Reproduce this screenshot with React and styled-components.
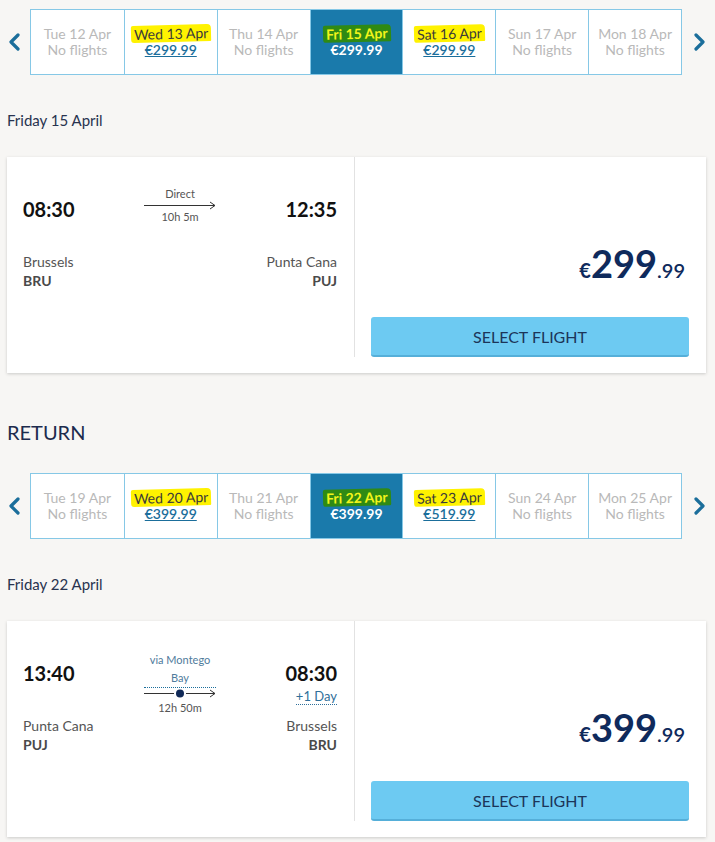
import React from 'react';
import styled, { createGlobalStyle } from 'styled-components';

const Global = createGlobalStyle`
  html, body { margin: 0; padding: 0; background: #f7f6f4; }
  body { font-family: Lato, "Open Sans", sans-serif; color: #333; }
`;

const Page = styled.div`
  padding: 9px 9px 4px 7px;
  width: 715px;
  box-sizing: border-box;
`;

const DateNav = styled.div`
  display: flex;
  align-items: center;
  margin: 0 -9px 0 -7px;
`;

const ArrowBtn = styled.div`
  width: ${p => p.w}px;
  height: 66px;
  display: flex;
  align-items: center;
  justify-content: center;
  color: #1b6e9b;
`;

const Strip = styled.div`
  display: grid;
  grid-template-columns: repeat(7, 1fr);
  width: 652px;
  height: 66px;
  box-sizing: border-box;
  border: 1px solid #86c8e6;
  background: #fff;
`;

const Cell = styled.div`
  display: flex;
  flex-direction: column;
  align-items: center;
  justify-content: center;
  font-size: 14px;
  line-height: 16px;
  background: ${p => (p.selected ? '#1a7aab' : '#fff')};
  border-left: ${p => (p.first ? 'none' : '1px solid #86c8e6')};
  color: ${p => (p.selected ? '#fff' : p.empty ? '#b9b9b9' : '#3a3a3a')};
  font-weight: ${p => (p.selected ? 700 : 400)};
`;

const Mark = styled.span`
  background: ${p => (p.green ? '#2f8a14' : '#fff200')};
  color: ${p => (p.green ? '#f3f51a' : 'inherit')};
  padding: 1px 3px 0;
  margin: -1px -3px 0;
  border-radius: 2px 4px 1px 3px;
  transform: rotate(-1.5deg);
  display: inline-block;
`;

const PriceLink = styled.span`
  color: ${p => (p.selected ? '#fff' : '#1b6e9b')};
  text-decoration: ${p => (p.selected ? 'none' : 'underline')};
  font-weight: ${p => (p.selected ? 700 : 600)};
`;

const DayHeading = styled.div`
  font-size: 15px;
  line-height: 20px;
  color: #28334f;
  margin-top: 35px;
`;

const ReturnHeading = styled.div`
  font-size: 20px;
  line-height: 24px;
  color: #1c2b4d;
  margin: 47px 0 29px;
`;

const Card = styled.div`
  display: grid;
  grid-template-columns: 348px 1fr;
  height: 216px;
  margin-top: 27px;
  background: #fff;
  box-shadow: 0 1px 3px rgba(0, 0, 0, 0.18);
`;

const Itinerary = styled.div`
  padding: 30px 17px 0 16px;
  border-right: 1px solid #e2e2e2;
  margin-bottom: 16px;
  display: flex;
  flex-direction: column;
`;

const TimesRow = styled.div`
  display: flex;
  justify-content: space-between;
  align-items: flex-start;
  height: 65px;
`;

const TimeCol = styled.div`
  display: flex;
  flex-direction: column;
  align-items: ${p => (p.right ? 'flex-end' : 'flex-start')};
  width: 90px;
  padding-top: 10px;
`;

const Time = styled.div`
  font-size: 20px;
  line-height: 24px;
  font-weight: 700;
  color: #111;
`;

const NextDay = styled.div`
  font-size: 13px;
  line-height: 15px;
  color: #2f6f9a;
  border-bottom: 1px dotted #2f6f9a;
  margin-top: 4px;
`;

const Route = styled.div`
  width: 72px;
  display: flex;
  flex-direction: column;
  align-items: center;
  font-size: 11px;
  line-height: 14px;
  color: #555;
`;

const Via = styled.div`
  width: 100%;
  text-align: center;
  color: #4f7b9c;
  font-size: 11px;
  line-height: 18px;
  border-bottom: 1px dotted #1b6e9b;
  margin-bottom: 1px;
`;

const Duration = styled.div`
  margin-top: ${p => p.gap}px;
`;

const CityRow = styled.div`
  display: flex;
  justify-content: space-between;
  font-size: 14px;
  line-height: 19px;
`;

const City = styled.div`
  text-align: ${p => (p.right ? 'right' : 'left')};
  color: #555;
`;

const Code = styled.div`
  font-weight: 700;
  color: #4a4a4a;
`;

const PriceSide = styled.div`
  display: flex;
  flex-direction: column;
  justify-content: flex-end;
  padding: 0 17px 16px 16px;
`;

const Price = styled.div`
  text-align: right;
  color: #0f2a5c;
  font-weight: 700;
  margin-right: 4px;
  margin-bottom: 27px;
  line-height: 36px;
`;

const Cur = styled.span`
  font-size: 20px;
`;

const Big = styled.span`
  font-size: 38px;
`;

const Cents = styled.span`
  font-size: 20px;
  font-weight: 600;
`;

const SelectBtn = styled.button`
  height: 40px;
  width: 100%;
  border: 0;
  border-bottom: 2px solid #55afd9;
  border-radius: 3px;
  background: #6dcaf2;
  color: #1c3559;
  font-family: Lato, "Open Sans", sans-serif;
  font-size: 16px;
  cursor: pointer;
`;

const Chevron = ({ dir }) => (
  <svg width="14" height="18" viewBox="0 0 14 18">
    <polyline
      points={dir === 'left' ? '10,2 3,9 10,16' : '4,2 11,9 4,16'}
      fill="none"
      stroke="currentColor"
      strokeWidth="3.2"
      strokeLinecap="round"
      strokeLinejoin="round"
    />
  </svg>
);

const Arrow = ({ stop }) => (
  <svg width="72" height="9" viewBox="0 0 72 9">
    {stop ? (
      <>
        <line x1="0" y1="4.5" x2="30" y2="4.5" stroke="#333" strokeWidth="1" />
        <circle cx="36" cy="4.5" r="4" fill="#112a58" />
        <line x1="42" y1="4.5" x2="71" y2="4.5" stroke="#333" strokeWidth="1" />
      </>
    ) : (
      <line x1="0" y1="4.5" x2="71" y2="4.5" stroke="#333" strokeWidth="1" />
    )}
    <polyline points="66,1 71,4.5 66,8" fill="none" stroke="#333" strokeWidth="1" />
  </svg>
);

const outbound = [
  { d: 'Tue 12 Apr' },
  { d: 'Wed 13 Apr', p: '€299.99' },
  { d: 'Thu 14 Apr' },
  { d: 'Fri 15 Apr', p: '€299.99', sel: true },
  { d: 'Sat 16 Apr', p: '€299.99' },
  { d: 'Sun 17 Apr' },
  { d: 'Mon 18 Apr' },
];

const inbound = [
  { d: 'Tue 19 Apr' },
  { d: 'Wed 20 Apr', p: '€399.99' },
  { d: 'Thu 21 Apr' },
  { d: 'Fri 22 Apr', p: '€399.99', sel: true },
  { d: 'Sat 23 Apr', p: '€519.99' },
  { d: 'Sun 24 Apr' },
  { d: 'Mon 25 Apr' },
];

function DateStrip({ days }) {
  return (
    <DateNav>
      <ArrowBtn w={30}><Chevron dir="left" /></ArrowBtn>
      <Strip>
        {days.map((day, i) => (
          <Cell key={day.d} first={i === 0} selected={day.sel} empty={!day.p}>
            {day.p ? <Mark green={day.sel}>{day.d}</Mark> : <span>{day.d}</span>}
            {day.p ? <PriceLink selected={day.sel}>{day.p}</PriceLink> : <span>No flights</span>}
          </Cell>
        ))}
      </Strip>
      <ArrowBtn w={33}><Chevron dir="right" /></ArrowBtn>
    </DateNav>
  );
}

function FlightCard({ f }) {
  return (
    <Card>
      <Itinerary>
        <TimesRow>
          <TimeCol><Time>{f.dep}</Time></TimeCol>
          <Route>
            {f.via ? <Via>{f.via}</Via> : <div>Direct</div>}
            <Arrow stop={!!f.via} />
            <Duration gap={f.via ? 3 : 0}>{f.dur}</Duration>
          </Route>
          <TimeCol right>
            <Time>{f.arr}</Time>
            {f.plus && <NextDay>+1 Day</NextDay>}
          </TimeCol>
        </TimesRow>
        <CityRow>
          <City>{f.from}<Code>{f.fromCode}</Code></City>
          <City right>{f.to}<Code>{f.toCode}</Code></City>
        </CityRow>
      </Itinerary>
      <PriceSide>
        <Price><Cur>€</Cur><Big>{f.price}</Big><Cents>.99</Cents></Price>
        <SelectBtn>SELECT FLIGHT</SelectBtn>
      </PriceSide>
    </Card>
  );
}

export default function App() {
  return (
    <Page>
      <Global />
      <DateStrip days={outbound} />
      <DayHeading>Friday 15 April</DayHeading>
      <FlightCard
        f={{ dep: '08:30', arr: '12:35', dur: '10h 5m', from: 'Brussels', fromCode: 'BRU', to: 'Punta Cana', toCode: 'PUJ', price: '299' }}
      />
      <ReturnHeading>RETURN</ReturnHeading>
      <DateStrip days={inbound} />
      <DayHeading>Friday 22 April</DayHeading>
      <FlightCard
        f={{ dep: '13:40', arr: '08:30', plus: true, via: 'via Montego Bay', dur: '12h 50m', from: 'Punta Cana', fromCode: 'PUJ', to: 'Brussels', toCode: 'BRU', price: '399' }}
      />
    </Page>
  );
}
